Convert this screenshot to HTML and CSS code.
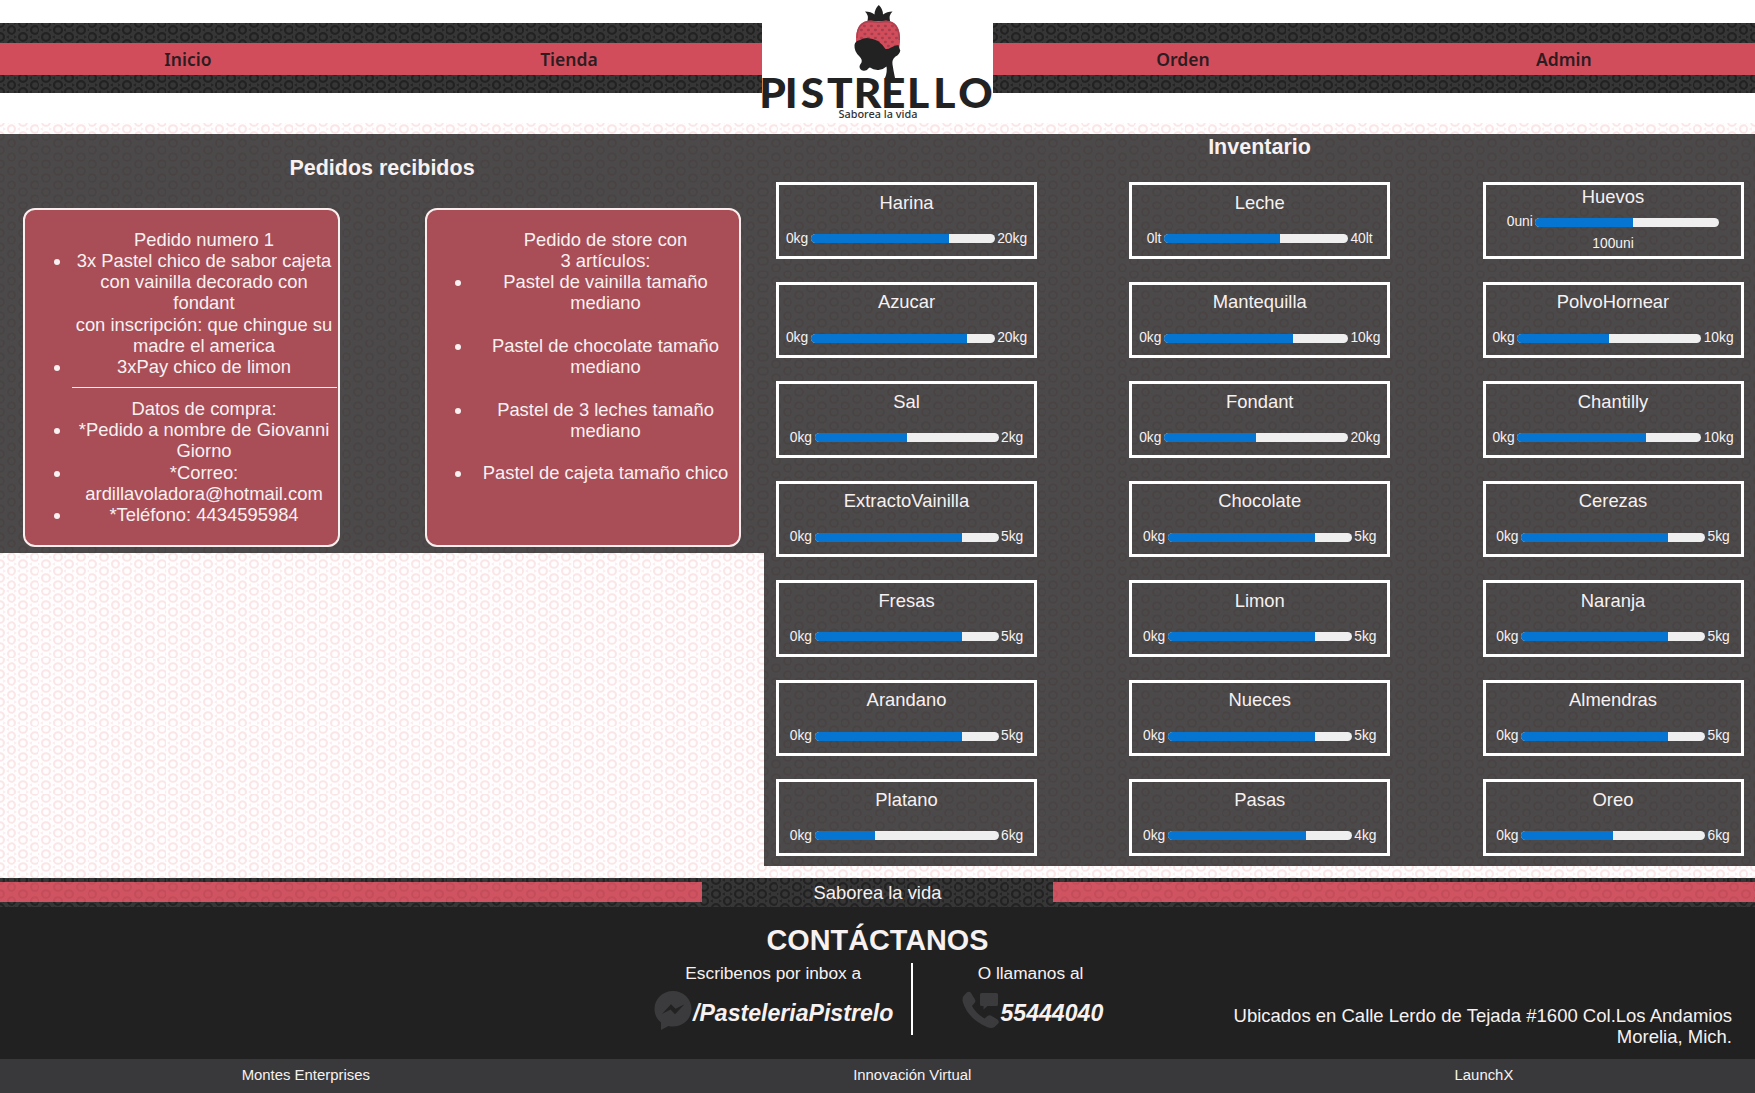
FILE: index.html
```html
<!DOCTYPE html>
<html lang="es">
<head>
<meta charset="utf-8">
<title>Pistrello - Admin</title>
<link rel="stylesheet" href="styles.css">
</head>
<body>
<header class="header">
  <nav class="nav"><div class="nav-bar"><a>Inicio</a><a>Tienda</a></div></nav>
  <svg class="logo" width="231" height="123" viewBox="0 0 231 123">
    <path d="M105.500 21Q107 15 103 11.500Q109 11.500 112.500 14.500Q112.500 9 116.800 5Q121 9 121 14.500Q125 11.500 130.500 11.500Q126.500 15 128 21Z" fill="#222"/>
    <path d="M94 42Q93 20.500 109 20.500Q116.500 22 124 20.500Q139 21 138 42L137 51H96Z" fill="#d24d5c"/>
    <path d="M95 38Q95 21.500 109 21.500Q116.500 23 124 21.500Q137.500 22 137.200 40" fill="none" stroke="#ac4150" stroke-width="1.500"/>
    <g fill="none" stroke="#a63f4d" stroke-width="2.300" stroke-linecap="round" stroke-dasharray="0.800 6.200">
      <path d="M102 26H134"/><path d="M99 30H137"/><path d="M102.500 34H135"/><path d="M99 38H137"/><path d="M109 42H136"/><path d="M119 46H134"/>
    </g>
    <path d="M92.500 45Q93 41 98 40Q101 38 105 38Q111 38.500 116 41Q120 44 123.500 49Q126 49.500 129 47.500Q132 45.500 136.500 45Q137 48 138.300 50.500Q137.500 54.500 133.500 56.500Q129.500 60 130.500 64.500Q131.500 71 133 78H123Q125.500 72 124.500 66.500Q120 70.500 115.500 70Q111 69.500 108 67.500Q106.500 67.500 106 69Q104.500 71 101.500 70.700Q97.500 70 97.500 66.500Q98 64.500 99.500 62.500Q100.500 59.500 97.500 56.500Q92 51.500 92.500 45Z" fill="#222"/>
    <text class="logo-name" y="108" x="-2.800 22.700 38.800 65 91.800 119 144.900 171.300 196.300">PISTRELLO</text>
    <text class="logo-tag" x="76.500" y="118" textLength="79" lengthAdjust="spacingAndGlyphs">Saborea la vida</text>
  </svg>
  <nav class="nav"><div class="nav-bar"><a>Orden</a><a>Admin</a></div></nav>
</header>

<main class="main">
  <section class="orders">
    <h3>Pedidos recibidos</h3>
    <div class="order-list">
      <article class="order">
        <ul>
          <li class="plain">Pedido numero 1</li>
          <li>3x Pastel chico de sabor cajeta<br>con vainilla decorado con<br>fondant<br>con inscripción: que chingue su<br>madre el america</li>
          <li>3xPay chico de limon</li>
        </ul>
        <hr>
        <ul>
          <li class="plain">Datos de compra:</li>
          <li>*Pedido a nombre de Giovanni<br>Giorno</li>
          <li>*Correo:<br>ardillavoladora@hotmail.com</li>
          <li>*Teléfono: 4434595984</li>
        </ul>
      </article>
      <article class="order">
        <ul>
          <li class="plain">Pedido de store con<br>3 artículos:</li>
          <li class="spaced">Pastel de vainilla tamaño<br>mediano</li>
          <li class="spaced">Pastel de chocolate tamaño<br>mediano</li>
          <li class="spaced">Pastel de 3 leches tamaño<br>mediano</li>
          <li>Pastel de cajeta tamaño chico</li>
        </ul>
      </article>
    </div>
  </section>

  <section class="inventory">
    <h3>Inventario</h3>
    <div class="items">
      <div class="item"><p>Harina</p><div class="level"><span>0kg</span><div class="bar"><div class="fill" style="width:75%"></div></div><span>20kg</span></div></div>
      <div class="item"><p>Leche</p><div class="level"><span>0lt</span><div class="bar"><div class="fill" style="width:63%"></div></div><span>40lt</span></div></div>
      <div class="item wrapped"><p>Huevos</p><div class="level"><span>0uni</span><div class="bar"><div class="fill" style="width:53%"></div></div><span>100uni</span></div></div>
      <div class="item"><p>Azucar</p><div class="level"><span>0kg</span><div class="bar"><div class="fill" style="width:85%"></div></div><span>20kg</span></div></div>
      <div class="item"><p>Mantequilla</p><div class="level"><span>0kg</span><div class="bar"><div class="fill" style="width:70%"></div></div><span>10kg</span></div></div>
      <div class="item"><p>PolvoHornear</p><div class="level"><span>0kg</span><div class="bar"><div class="fill" style="width:50%"></div></div><span>10kg</span></div></div>
      <div class="item"><p>Sal</p><div class="level"><span>0kg</span><div class="bar"><div class="fill" style="width:50%"></div></div><span>2kg</span></div></div>
      <div class="item"><p>Fondant</p><div class="level"><span>0kg</span><div class="bar"><div class="fill" style="width:50%"></div></div><span>20kg</span></div></div>
      <div class="item"><p>Chantilly</p><div class="level"><span>0kg</span><div class="bar"><div class="fill" style="width:70%"></div></div><span>10kg</span></div></div>
      <div class="item"><p>ExtractoVainilla</p><div class="level"><span>0kg</span><div class="bar"><div class="fill" style="width:80%"></div></div><span>5kg</span></div></div>
      <div class="item"><p>Chocolate</p><div class="level"><span>0kg</span><div class="bar"><div class="fill" style="width:80%"></div></div><span>5kg</span></div></div>
      <div class="item"><p>Cerezas</p><div class="level"><span>0kg</span><div class="bar"><div class="fill" style="width:80%"></div></div><span>5kg</span></div></div>
      <div class="item"><p>Fresas</p><div class="level"><span>0kg</span><div class="bar"><div class="fill" style="width:80%"></div></div><span>5kg</span></div></div>
      <div class="item"><p>Limon</p><div class="level"><span>0kg</span><div class="bar"><div class="fill" style="width:80%"></div></div><span>5kg</span></div></div>
      <div class="item"><p>Naranja</p><div class="level"><span>0kg</span><div class="bar"><div class="fill" style="width:80%"></div></div><span>5kg</span></div></div>
      <div class="item"><p>Arandano</p><div class="level"><span>0kg</span><div class="bar"><div class="fill" style="width:80%"></div></div><span>5kg</span></div></div>
      <div class="item"><p>Nueces</p><div class="level"><span>0kg</span><div class="bar"><div class="fill" style="width:80%"></div></div><span>5kg</span></div></div>
      <div class="item"><p>Almendras</p><div class="level"><span>0kg</span><div class="bar"><div class="fill" style="width:80%"></div></div><span>5kg</span></div></div>
      <div class="item"><p>Platano</p><div class="level"><span>0kg</span><div class="bar"><div class="fill" style="width:33%"></div></div><span>6kg</span></div></div>
      <div class="item"><p>Pasas</p><div class="level"><span>0kg</span><div class="bar"><div class="fill" style="width:75%"></div></div><span>4kg</span></div></div>
      <div class="item"><p>Oreo</p><div class="level"><span>0kg</span><div class="bar"><div class="fill" style="width:50%"></div></div><span>6kg</span></div></div>
    </div>
  </section>
</main>

<footer class="footer">
  <div class="slogan"><div class="ribbon"></div><p>Saborea la vida</p><div class="ribbon"></div></div>
  <div class="contact">
    <div></div>
    <div class="contact-main">
      <h2>CONTÁCTANOS</h2>
      <div class="channels">
        <div class="channel inbox">
          <p>Escribenos por inbox a</p>
          <div class="handle">
            <svg width="38" height="39" viewBox="0 0 38 39"><path d="M19 0C8.500 0 .5 8 .5 18c0 5.500 2.200 9.800 6.500 13.500V39l7.500-4c1.500.4 3 .5 4.500.5 10.500 0 18.500-8 18.500-17.700S29.500 0 19 0z" fill="#3b3b3d"/><path d="M8 23L17 13.300L21.500 17.800L30.500 13.300L21 23.200L16.500 18.500Z" fill="#222"/></svg>
            <em>/PasteleriaPistrelo</em>
          </div>
        </div>
        <div class="channel phone">
          <p>O llamanos al</p>
          <div class="handle">
            <svg width="38" height="38" viewBox="0 0 38 38"><path d="M1.500 5L5 1.300Q7.500-.3 9 2L13 8.500Q14 10.500 12.500 12L10 15Q14 22.500 22.500 27.500L25.800 24.800Q27.500 23.700 29.300 24.700L35.500 28.500Q38 30.500 36 32.700L32.500 36Q30 37.800 25.500 36.300Q6 28 .8 11Q0 7 1.500 5Z" fill="#3b3b3d"/><path d="M19.500 2H34.500Q36 2 36 3.500V13.500Q36 15 34.500 15H25.500L21.500 18.500V15H19.500Q18 15 18 13.500V3.500Q18 2 19.500 2Z" fill="#3b3b3d"/></svg>
            <em>55444040</em>
          </div>
        </div>
      </div>
    </div>
    <p class="address">Ubicados en Calle Lerdo de Tejada #1600 Col.Los Andamios<br>Morelia, Mich.</p>
  </div>
  <div class="credits"><span>Montes Enterprises</span><span>Innovación Virtual</span><span>LaunchX</span></div>
</footer>
</body>
</html>
```

FILE: styles.css
```css
* { box-sizing: border-box; }

:root {
  --rings-dark: url("data:image/svg+xml,%3Csvg xmlns='http://www.w3.org/2000/svg' width='23.1' height='13.8' viewBox='0 0 23.1 13.8'%3E%3Cg fill='none' stroke='%23222' stroke-width='2.2'%3E%3Ccircle cx='11.55' cy='6.9' r='3.8'/%3E%3Ccircle cx='0' cy='0' r='3.8'/%3E%3Ccircle cx='23.1' cy='0' r='3.8'/%3E%3Ccircle cx='0' cy='13.8' r='3.8'/%3E%3Ccircle cx='23.1' cy='13.8' r='3.8'/%3E%3C/g%3E%3Cpath d='M3 5.200v3.400l2.800-1.700zM20.100 5.200v3.400l-2.800-1.700zM8.550 0v1.700L5.750 0zM14.550 0v1.700L17.350 0zM8.550 13.800v-1.700l-2.800 1.700zM14.550 13.800v-1.700l2.800 1.700z' fill='%23242424'/%3E%3C/svg%3E");
  --rings-pink: url("data:image/svg+xml,%3Csvg xmlns='http://www.w3.org/2000/svg' width='23.1' height='13.8' viewBox='0 0 23.1 13.8'%3E%3Cg fill='none' stroke='%23fae5e7' stroke-width='2'%3E%3Ccircle cx='11.55' cy='6.9' r='3.8'/%3E%3Ccircle cx='0' cy='0' r='3.8'/%3E%3Ccircle cx='23.1' cy='0' r='3.8'/%3E%3Ccircle cx='0' cy='13.8' r='3.8'/%3E%3Ccircle cx='23.1' cy='13.8' r='3.8'/%3E%3C/g%3E%3Cpath d='M3 5.200v3.400l2.800-1.700zM20.100 5.200v3.400l-2.800-1.700zM8.550 0v1.700L5.750 0zM14.550 0v1.700L17.350 0zM8.550 13.800v-1.700l-2.800 1.700zM14.550 13.800v-1.700l2.800 1.700z' fill='%23fbecee'/%3E%3C/svg%3E");
  --rings-panel: url("data:image/svg+xml,%3Csvg xmlns='http://www.w3.org/2000/svg' width='23.1' height='13.8' viewBox='0 0 23.1 13.8'%3E%3Cg fill='none' stroke='%23494344' stroke-width='2'%3E%3Ccircle cx='11.55' cy='6.9' r='3.8'/%3E%3Ccircle cx='0' cy='0' r='3.8'/%3E%3Ccircle cx='23.1' cy='0' r='3.8'/%3E%3Ccircle cx='0' cy='13.8' r='3.8'/%3E%3Ccircle cx='23.1' cy='13.8' r='3.8'/%3E%3C/g%3E%3C/svg%3E");
  --rings-ribbon: url("data:image/svg+xml,%3Csvg xmlns='http://www.w3.org/2000/svg' width='23.1' height='13.8' viewBox='0 0 23.1 13.8'%3E%3Cg fill='none' stroke='%23c34d5a' stroke-width='2'%3E%3Ccircle cx='11.55' cy='6.9' r='3.8'/%3E%3Ccircle cx='0' cy='0' r='3.8'/%3E%3Ccircle cx='23.1' cy='0' r='3.8'/%3E%3Ccircle cx='0' cy='13.8' r='3.8'/%3E%3Ccircle cx='23.1' cy='13.8' r='3.8'/%3E%3C/g%3E%3C/svg%3E");
}

body {
  margin: 0;
  min-height: 1093px;
  background: #fffdfd var(--rings-pink) 0 122.400px / 23.1px 13.800px;
  font: 18.400px/21.250px "Liberation Sans", Arial, sans-serif;
  color: #f7f1f1;
}

p, ul, h2, h3 { margin: 0; }

.header { display: flex; height: 123px; background: #fff; }
.nav {
  flex: 1;
  height: 70px;
  margin-top: 23px;
  padding-top: 19.500px;
  background: #363636 var(--rings-dark) 0 0 / 23.1px 13.800px;
}
.nav-bar {
  display: flex;
  justify-content: space-around;
  align-items: center;
  height: 32px;
  background: #d24d5c;
  color: #2d1c20;
  font: 600 17.500px "Trebuchet MS", "Noto Sans", sans-serif;
}
.logo { display: block; background: #fff; overflow: visible; }
.logo-name { font: 900 42.500px Lato, sans-serif; fill: #222; }
.logo-tag { font: 500 11px "Noto Sans", sans-serif; fill: #333; }

.main { display: flex; align-items: flex-start; margin-top: 11px; height: 744px; }
.orders, .inventory { background: #4b4949 var(--rings-panel) 0 2.500px / 23.1px 13.800px; }
h3 { font-size: 21.500px; line-height: 25px; text-align: center; }

.orders { width: 764px; height: 418.500px; padding: 22px 23px 0; }
.order-list { display: flex; justify-content: space-between; margin-top: 27px; }
.order {
  width: 316.500px;
  height: 339px;
  padding-top: 18.500px;
  border: 2px solid #fbeeee;
  border-radius: 12px;
  background: #a94d57;
  text-align: center;
}
.order ul { padding: 0 1px 0 46.500px; }
.order .plain { list-style: none; }
.order .spaced { margin-bottom: 21.250px; }
.order hr { height: 1px; margin: 10px 1px 9.500px 47px; border: 0; background: #fbeeee; }

.inventory { flex: 1; height: 732px; padding-top: 1px; background-position: 0.500px 2.500px; }
.items {
  display: grid;
  grid-template-columns: repeat(3, 261px);
  grid-auto-rows: 76.500px;
  justify-content: space-between;
  row-gap: 23px;
  padding: 22px 11.500px 0 12px;
}
.item { border: 3px solid #fff; padding-top: 6.500px; text-align: center; }
.level {
  display: flex;
  flex-wrap: wrap;
  justify-content: center;
  align-items: center;
  column-gap: 2.500px;
  margin-top: 18px;
  font-size: 13.800px;
  line-height: 16px;
}
.bar { width: 184px; height: 9px; border-radius: 4.500px; background: #efefef; overflow: hidden; }
.fill { height: 100%; background: #0575d1; }
.wrapped { padding-top: 1px; }
.wrapped .level { margin-top: 7px; row-gap: 6px; }

.slogan {
  display: grid;
  grid-template-columns: 2fr 1fr 2fr;
  align-items: start;
  height: 29px;
  padding-top: 4px;
  background: #363636 var(--rings-dark) 0 2px / 23.1px 13.800px;
  text-align: center;
}
.ribbon { height: 20px; background: #cf5361 var(--rings-ribbon) 0 -2px / 23.1px 13.800px; }
.contact {
  display: grid;
  grid-template-columns: 1fr 460px 1fr;
  height: 151.500px;
  background: #212121;
}
.contact-main { padding-top: 17px; }
h2 { font-size: 28.800px; line-height: 32px; text-align: center; }
.channels { display: flex; margin-top: 7px; font-size: 17.300px; text-align: center; }
.channel { height: 72px; }
.inbox { width: 265.500px; padding-right: 15px; border-right: 2px solid #fff; }
.inbox p { padding-left: 3px; }
.phone { width: 194px; padding-left: 43px; }
.phone p { padding-right: 2px; }
.handle { display: flex; align-items: center; margin-top: 7px; padding-left: 6px; gap: 1.500px; }
.handle em { font-weight: bold; font-size: 23.100px; padding-top: 6px; }
.phone em { margin-left: -1px; }
.address {
  align-self: end;
  justify-self: end;
  padding: 0 23px 11px 0;
  font-size: 18.500px;
  text-align: right;
  white-space: nowrap;
}
.credits {
  display: flex;
  justify-content: space-around;
  align-items: center;
  height: 34.500px;
  background: #39393b;
  font-size: 14.900px;
}
```
